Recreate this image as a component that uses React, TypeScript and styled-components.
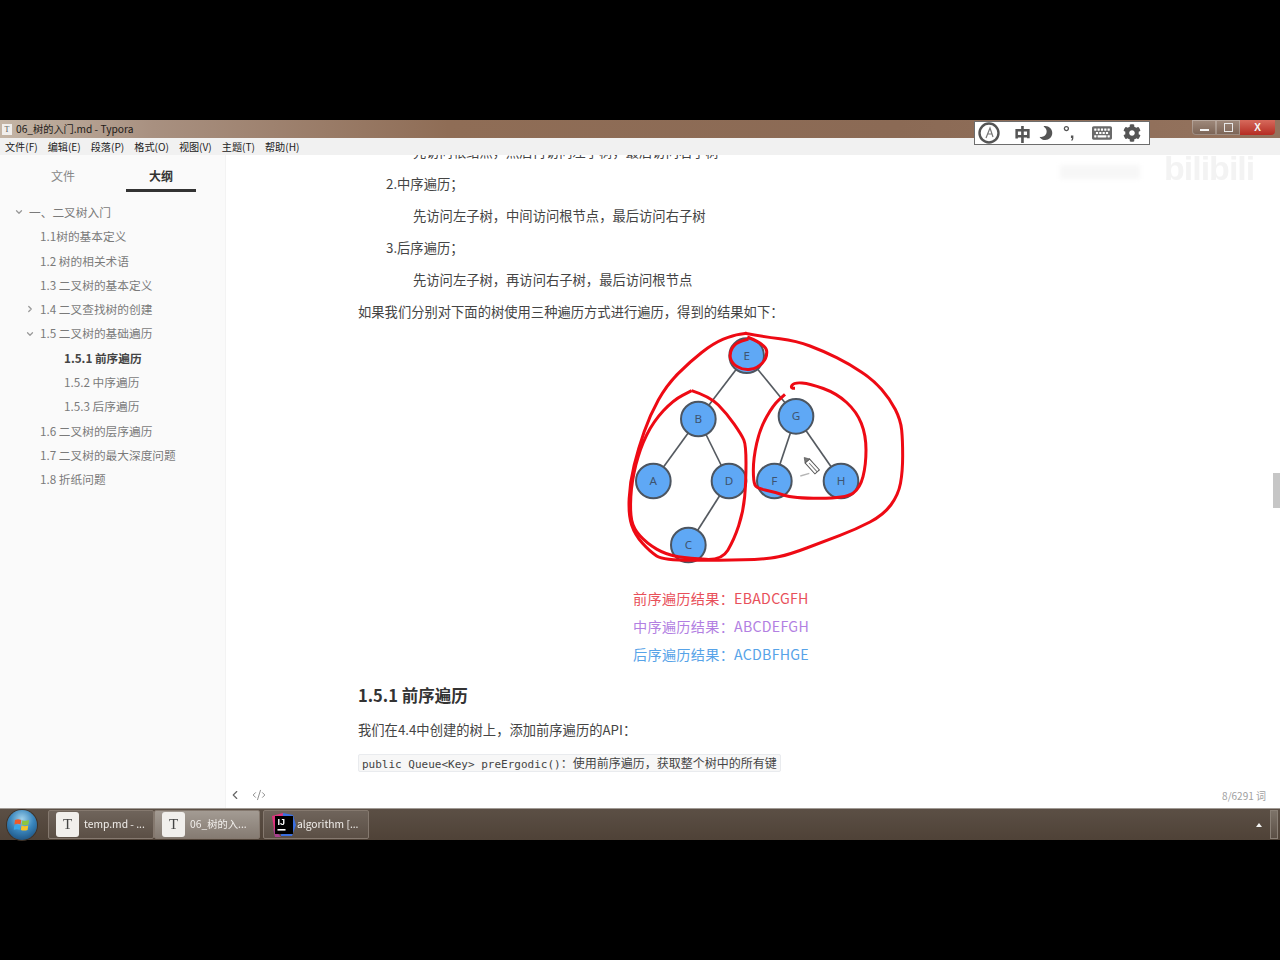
import styled, {createGlobalStyle} from "styled-components";
import {FaCog, FaKeyboard, FaMoon} from "react-icons/fa";
import {ChevronDown, ChevronLeft, ChevronRight, CodeXml} from "lucide-react";

const CJK = `"Noto Sans CJK SC", "Noto Sans", sans-serif`;

type OutlineItem = {
    label: string;
    level: 0 | 1 | 2;
    arrow?: "open" | "closed";
    active?: boolean;
};

const outline: OutlineItem[] = [
    {label: "一、二叉树入门", level: 0, arrow: "open"},
    {label: "1.1树的基本定义", level: 1},
    {label: "1.2 树的相关术语", level: 1},
    {label: "1.3 二叉树的基本定义", level: 1},
    {label: "1.4 二叉查找树的创建", level: 1, arrow: "closed"},
    {label: "1.5 二叉树的基础遍历", level: 1, arrow: "open"},
    {label: "1.5.1 前序遍历", level: 2, active: true},
    {label: "1.5.2 中序遍历", level: 2},
    {label: "1.5.3 后序遍历", level: 2},
    {label: "1.6 二叉树的层序遍历", level: 1},
    {label: "1.7 二叉树的最大深度问题", level: 1},
    {label: "1.8 折纸问题", level: 1},
];

const menus = ["文件(F)", "编辑(E)", "段落(P)", "格式(O)", "视图(V)", "主题(T)", "帮助(H)"];

// Node positions are in the 3x coordinates of the 930x735 drawing
const nodes = [
    {id: "E", x: 410, y: 92},
    {id: "B", x: 265, y: 282},
    {id: "G", x: 558, y: 274},
    {id: "A", x: 130, y: 468},
    {id: "D", x: 357, y: 468},
    {id: "F", x: 493, y: 468},
    {id: "H", x: 693, y: 468},
    {id: "C", x: 235, y: 660},
];

const edges = [
    ["E", "B"],
    ["E", "G"],
    ["B", "A"],
    ["B", "D"],
    ["D", "C"],
    ["G", "F"],
    ["G", "H"],
];

const outerLoop = [
    [405, 25], [460, 35], [560, 48], [640, 78], [720, 118], [790, 165], [840, 222], [872, 285], [878, 345],
    [878, 440], [865, 510], [820, 570], [740, 612], [640, 650], [540, 688], [470, 703], [330, 706], [160, 706],
    [120, 680], [75, 630], [55, 570], [60, 470], [85, 370], [120, 270], [170, 180], [240, 110], [310, 55], [370, 30], [410, 25],
];
const leftLoop = [
    [245, 197], [300, 215], [350, 265], [395, 330], [408, 360], [408, 470], [400, 560], [372, 645], [335, 706],
    [240, 700], [170, 690], [110, 655], [70, 610], [60, 560], [65, 470], [90, 370], [130, 290], [190, 225], [245, 197],
];
const rootLoop = [
    [412, 36], [468, 58], [472, 98], [442, 130], [400, 136], [365, 115], [358, 85], [375, 55], [415, 42],
];
const rightLoop = [
    [555, 190], [540, 190], [552, 172], [600, 176], [680, 205], [740, 260], [768, 330], [768, 420], [750, 490],
    [708, 520], [550, 520], [490, 500], [440, 490], [430, 470], [430, 400], [450, 310], [490, 240], [525, 208],
];

// Round the hand drawn loop through the midpoints of its points
const smooth = (points: number[][]) => {
    let d = `M${points[0][0]} ${points[0][1]}`;
    for (let i = 1; i < points.length - 1; i++) {
        const midX = (points[i][0] + points[i + 1][0]) / 2;
        const midY = (points[i][1] + points[i + 1][1]) / 2;
        d += ` Q${points[i][0]} ${points[i][1]} ${midX} ${midY}`;
    }
    const last = points[points.length - 1];
    return `${d} L${last[0]} ${last[1]}`;
};

const TreeDiagram = () => {
    const find = (id: string) => nodes.find((n) => n.id === id)!;
    return (
        <Figure viewBox="0 0 930 735">
            {edges.map(([from, to]) => (
                <line
                    key={from + to}
                    x1={find(from).x}
                    y1={find(from).y}
                    x2={find(to).x}
                    y2={find(to).y}
                    stroke="#555a60"
                    strokeWidth={5}
                />
            ))}
            {nodes.map((n) => (
                <g key={n.id}>
                    <circle cx={n.x} cy={n.y} r={52} fill="#5fa8f5" stroke="#4c5560" strokeWidth={6} />
                    <NodeLabel x={n.x} y={n.y + 12}>
                        {n.id}
                    </NodeLabel>
                </g>
            ))}
            {[outerLoop, leftLoop, rootLoop, rightLoop].map((loop, i) => (
                <path key={i} d={smooth(loop)} fill="none" stroke="#ee0a14" strokeWidth={9} strokeLinejoin="round" />
            ))}
            <path d="M571 453 L598 445" stroke="#b5b5b5" strokeWidth={4} fill="none" />
            <g transform="rotate(48 606 425)">
                <rect x={584} y={415} width={44} height={18} fill="#fff" stroke="#555" strokeWidth={3} />
                <path d="M584 415 L570 424 L584 433 Z" fill="#777" stroke="#555" strokeWidth={2} />
                <path d="M592 424 H628" stroke="#777" strokeWidth={3} />
            </g>
        </Figure>
    );
};

const App = () => {
    return (
        <>
            <GlobalStyle />
            <Screen>
                <Letterbox />
                <Window>
                    <TitleBar>
                        <AppIcon>T</AppIcon>
                        <TitleText>06_树的入门.md - Typora</TitleText>
                        <WindowControls>
                            <MinButton>
                                <MinGlyph />
                            </MinButton>
                            <MaxButton>
                                <MaxGlyph />
                            </MaxButton>
                            <CloseButton>X</CloseButton>
                        </WindowControls>
                    </TitleBar>
                    <MenuBar>
                        {menus.map((m) => (
                            <MenuItem key={m}>{m}</MenuItem>
                        ))}
                    </MenuBar>
                    <Body>
                        <Sidebar>
                            <Tabs>
                                <Tab>文件</Tab>
                                <Tab $active>大纲</Tab>
                            </Tabs>
                            <Outline>
                                {outline.map((item) => (
                                    <OutlineRow key={item.label} $level={item.level} $active={item.active}>
                                        {item.arrow && (
                                            <Arrow>
                                                {item.arrow === "open" ? (
                                                    <ChevronDown size={10} strokeWidth={3} />
                                                ) : (
                                                    <ChevronRight size={10} strokeWidth={3} />
                                                )}
                                            </Arrow>
                                        )}
                                        {item.label}
                                    </OutlineRow>
                                ))}
                            </Outline>
                        </Sidebar>
                        <Main>
                            <Content>
                                <Article>
                                    <SubLine>{"先访问根结点\uFF0C然后再访问左子树\uFF0C最后访问右子树"}</SubLine>
                                    <OrderLine>{"2.中序遍历\uFF1B"}</OrderLine>
                                    <SubLine>{"先访问左子树\uFF0C中间访问根节点\uFF0C最后访问右子树"}</SubLine>
                                    <OrderLine>{"3.后序遍历\uFF1B"}</OrderLine>
                                    <SubLine>{"先访问左子树\uFF0C再访问右子树\uFF0C最后访问根节点"}</SubLine>
                                    <Paragraph>
                                        {"如果我们分别对下面的树使用三种遍历方式进行遍历\uFF0C得到的结果如下\uFF1A"}
                                    </Paragraph>
                                    <TreeDiagram />
                                    <Results>
                                        <ResultLine $color="#e8505a">{"前序遍历结果\uFF1AEBADCGFH"}</ResultLine>
                                        <ResultLine $color="#b27fe2">{"中序遍历结果\uFF1AABCDEFGH"}</ResultLine>
                                        <ResultLine $color="#57a3e8">{"后序遍历结果\uFF1AACDBFHGE"}</ResultLine>
                                    </Results>
                                    <Heading>1.5.1 前序遍历</Heading>
                                    <ApiLine>{"我们在4.4中创建的树上\uFF0C添加前序遍历的API\uFF1A"}</ApiLine>
                                    <CodeLine>
                                        <code>public Queue&lt;Key&gt; preErgodic()</code>
                                        {"\uFF1A使用前序遍历\uFF0C获取整个树中的所有键"}
                                    </CodeLine>
                                </Article>
                            </Content>
                            <Footer>
                                <FooterIcons>
                                    <ChevronLeft size={14} strokeWidth={2} color="#666" />
                                    <CodeXml size={14} strokeWidth={1.4} color="#777" />
                                </FooterIcons>
                                <WordCount>8/6291 词</WordCount>
                            </Footer>
                            <ScrollThumb />
                        </Main>
                    </Body>
                    <ImeBar>
                        <ImeDial>
                            <svg width="24" height="24" viewBox="0 0 24 24">
                                <circle cx="12" cy="12" r="9.5" fill="#fff" stroke="#555" strokeWidth="2.4" />
                                <path d="M9 17 L13 7 L16 16 M10 13 H15" fill="none" stroke="#777" strokeWidth="1.2" />
                            </svg>
                        </ImeDial>
                        <ImeZh>中</ImeZh>
                        <MoonGlyph>
                            <FaMoon size={14} />
                        </MoonGlyph>
                        <ImePunct>°,</ImePunct>
                        <KeyGlyph>
                            <FaKeyboard size={20} />
                        </KeyGlyph>
                        <GearGlyph>
                            <FaCog size={18} />
                        </GearGlyph>
                    </ImeBar>
                    <Watermark>
                        <WatermarkText />
                        <WatermarkLogo>bilibili</WatermarkLogo>
                    </Watermark>
                </Window>
                <Taskbar>
                    <StartOrb>
                        <svg width="18" height="18" viewBox="0 0 18 18">
                            <path d="M2 4 Q5 2.5 8.3 4 L7.6 8.4 Q4.6 7 1.4 8.4 Z" fill="#ef5a2a" />
                            <path d="M9.3 4.2 Q12.5 5.5 16 4 L15.4 8.5 Q12 9.8 8.7 8.6 Z" fill="#8cc63f" />
                            <path d="M1.3 9.4 Q4.4 8 7.4 9.4 L6.8 13.8 Q4 12.5 0.7 13.8 Z" fill="#3aa6e8" />
                            <path d="M8.5 9.6 Q12 10.8 15.2 9.5 L14.6 14 Q11 15.2 7.8 14 Z" fill="#f7c325" />
                        </svg>
                    </StartOrb>
                    <TaskGroup>
                        <TaskButton>
                            <TaskT>T</TaskT>
                            <TaskLabel>temp.md - ...</TaskLabel>
                        </TaskButton>
                        <TaskButton $current>
                            <TaskT>T</TaskT>
                            <TaskLabel>06_树的入...</TaskLabel>
                        </TaskButton>
                    </TaskGroup>
                    <TaskButton>
                        <IdeaIcon viewBox="0 0 26 26">
                            <path d="M1 4 L12 1 L13 14 L4 24 Z" fill="#e0337e" />
                            <path d="M12 1 L22 3 L25 13 L21 24 L10 24 Z" fill="#3b6fe0" />
                            <path d="M2 16 L10 25 L4 25 Z" fill="#a8408f" />
                            <rect x="4" y="4" width="18" height="18" fill="#000" />
                            <IdeaLetters x="6.5" y="13">
                                IJ
                            </IdeaLetters>
                            <rect x="6.5" y="17" width="8" height="1.6" fill="#fff" />
                        </IdeaIcon>
                        <TaskLabel>algorithm [...</TaskLabel>
                    </TaskButton>
                    <Tray>
                        <TrayArrow />
                        <ShowDesktop />
                    </Tray>
                </Taskbar>
                <Letterbox $grow />
            </Screen>
        </>
    );
};

const GlobalStyle = createGlobalStyle`
    html, body {
        margin: 0;
        padding: 0;
        background: #000;
    }
`;

const Screen = styled.div`
    display: flex;
    flex-direction: column;
    width: 1280px;
    height: 960px;
    overflow: hidden;
    background: #000;
    font-family: ${CJK};
`;

const Letterbox = styled.div<{$grow?: boolean}>`
    flex: ${(props) => (props.$grow ? "1" : "0 0 120px")};
    background: #000;
`;

const Window = styled.div`
    position: relative;
    display: flex;
    flex-direction: column;
    height: 688px;
    filter: blur(0.35px);
`;

const TitleBar = styled.div`
    display: flex;
    align-items: center;
    height: 18px;
    padding-left: 2px;
    background: linear-gradient(90deg, #c4b5a6 0, #a89080 12%, #8f6d56 35%, #8b6a55 70%, #94735e 100%);
`;

const AppIcon = styled.div`
    display: flex;
    align-items: center;
    justify-content: center;
    width: 10px;
    height: 11px;
    background: #f1efed;
    color: #555;
    font-size: 8px;
    font-family: "Liberation Serif", serif;
`;

const TitleText = styled.span`
    margin: -2px 0 0 4px;
    font-size: 10.2px;
    color: #1d1a18;
`;

const WindowControls = styled.div`
    display: flex;
    height: 15px;
    margin-left: auto;
    margin-right: 5px;
    margin-top: -3px;
`;

const MinButton = styled.div`
    display: flex;
    align-items: center;
    justify-content: center;
    width: 24px;
    border-radius: 0 0 0 4px;
    background: linear-gradient(#a08a7c, #7a6355);
    box-shadow: inset 0 0 0 1px rgba(255, 255, 255, 0.25);
`;

const MinGlyph = styled.div`
    width: 9px;
    height: 2px;
    margin-top: 4px;
    background: #f4f4f4;
`;

const MaxButton = styled(MinButton)`
    width: 24px;
    border-radius: 0;
`;

const MaxGlyph = styled.div`
    width: 7px;
    height: 7px;
    border: 1.5px solid #e8e8e8;
`;

const CloseButton = styled.div`
    display: flex;
    align-items: center;
    justify-content: center;
    width: 35px;
    border-radius: 0 0 4px 0;
    background: linear-gradient(#d66a5c, #b52c22);
    color: #f4f4f4;
    font-size: 10px;
    font-weight: 700;
    font-family: "Liberation Sans", sans-serif;
`;

const MenuBar = styled.div`
    display: flex;
    align-items: center;
    gap: 10px;
    height: 17px;
    padding-left: 5px;
    background: #f1f1f1;
`;

const MenuItem = styled.span`
    font-size: 10.15px;
    color: #222;
    white-space: nowrap;
`;

const Body = styled.div`
    display: flex;
    flex: 1;
    min-height: 0;
`;

const Sidebar = styled.aside`
    flex: 0 0 226px;
    background: #fafafa;
    border-right: 1px solid #f3f3f3;
    box-sizing: border-box;
`;

const Tabs = styled.div`
    display: grid;
    grid-template-columns: 70px 70px;
    column-gap: 28px;
    padding-left: 28px;
    height: 37px;
`;

const Tab = styled.div<{$active?: boolean}>`
    display: flex;
    align-items: center;
    justify-content: center;
    height: 37px;
    box-sizing: border-box;
    padding-top: 6px;
    font-size: 12px;
    font-weight: ${(props) => (props.$active ? 700 : 400)};
    color: ${(props) => (props.$active ? "#333" : "#888")};
    border-bottom: 3px solid ${(props) => (props.$active ? "#333" : "transparent")};
`;

const Outline = styled.div`
    display: flex;
    flex-direction: column;
    padding-top: 8px;
`;

const OutlineRow = styled.div<{$level: number; $active?: boolean}>`
    position: relative;
    height: 24.3px;
    line-height: 24.3px;
    padding-left: ${(props) => [29, 40, 64][props.$level]}px;
    font-size: 11.7px;
    font-weight: ${(props) => (props.$active ? 700 : 400)};
    color: ${(props) => (props.$active ? "#444" : "#7a7a7a")};
    white-space: nowrap;
`;

const Arrow = styled.span`
    position: absolute;
    display: flex;
    align-items: center;
    top: 0;
    height: 24.3px;
    margin-left: -15px;
    color: #999;
`;

const Main = styled.main`
    position: relative;
    display: flex;
    flex-direction: column;
    flex: 1;
    min-width: 0;
    background: #fff;
`;

const Content = styled.div`
    flex: 1;
    min-height: 0;
    overflow: hidden;
    padding-left: 132px;
`;

// The document is scrolled, so its first line is cut by the menu bar
const Article = styled.article`
    margin-top: -19px;
    color: #333;
    font-size: 13.3px;
`;

const Paragraph = styled.p`
    margin: 0;
    height: 32px;
    line-height: 32px;
    color: #444;
    white-space: nowrap;
`;

const OrderLine = styled(Paragraph)`
    padding-left: 28px;
`;

const SubLine = styled(Paragraph)`
    padding-left: 55px;
`;

const Figure = styled.svg`
    display: block;
    width: 310px;
    height: 245px;
    margin: -3px 0 0 252px;
`;

const NodeLabel = styled.text`
    font-family: "Noto Sans", sans-serif;
    font-size: 35px;
    fill: #3e5470;
    text-anchor: middle;
`;

const Results = styled.div`
    display: flex;
    flex-direction: column;
    margin: 14px 0 0 275px;
`;

const ResultLine = styled.div<{$color: string}>`
    height: 28px;
    line-height: 28px;
    font-size: 14.2px;
    letter-spacing: 0.25px;
    color: ${(props) => props.$color};
    white-space: nowrap;
`;

const Heading = styled.h3`
    margin: 15px 0 0;
    height: 24px;
    line-height: 24px;
    font-size: 16.5px;
    font-weight: 700;
    color: #333;
`;

const ApiLine = styled(Paragraph)`
    margin-top: 7px;
`;

const CodeLine = styled.div`
    display: inline-block;
    box-sizing: border-box;
    height: 18px;
    line-height: 16px;
    margin-top: 8px;
    padding: 0 3px;
    background: #f7f7f7;
    border: 1px solid #e9ebee;
    border-radius: 2px;
    font-size: 12px;
    color: #444;
    white-space: nowrap;

    code {
        font-family: "DejaVu Sans Mono", monospace;
        font-size: 11px;
    }
`;

const Footer = styled.footer`
    display: flex;
    align-items: center;
    justify-content: space-between;
    flex: 0 0 26px;
    padding: 0 14px 0 2px;
`;

const FooterIcons = styled.div`
    display: flex;
    align-items: center;
    gap: 10px;
`;

const WordCount = styled.span`
    font-size: 10px;
    color: #a0a0a0;
`;

const ScrollThumb = styled.div`
    position: absolute;
    top: 318px;
    right: 0;
    width: 7px;
    height: 35px;
    background: #c6c6c6;
`;

const ImeBar = styled.div`
    position: absolute;
    top: 1px;
    left: 974px;
    display: flex;
    align-items: center;
    box-sizing: border-box;
    width: 176px;
    height: 24px;
    background: #fff;
    border: 1px solid #6d6d6d;
    color: #555;
`;

const ImeDial = styled.div`
    display: flex;
    margin-left: 2px;
`;

const ImeZh = styled.span`
    margin-left: 13px;
    font-size: 17px;
    font-weight: 900;
    line-height: 1;
`;

const MoonGlyph = styled.span`
    display: flex;
    margin-left: 8px;
    transform: scaleX(-1);
`;

const ImePunct = styled.span`
    margin-left: 10px;
    width: 22px;
    font-size: 17px;
    font-weight: 700;
    font-family: "Liberation Sans", sans-serif;
`;

const KeyGlyph = styled.span`
    display: flex;
    margin-left: 7px;
    color: #6a6a6a;
`;

const GearGlyph = styled.span`
    display: flex;
    margin-left: 11px;
`;

const Watermark = styled.div`
    position: absolute;
    top: 26px;
    left: 1060px;
    display: flex;
    align-items: center;
    gap: 24px;
`;

const WatermarkText = styled.div`
    width: 80px;
    height: 14px;
    margin-top: 8px;
    background: #f7f7f7;
    filter: blur(2px);
`;

const WatermarkLogo = styled.span`
    font-family: "Liberation Sans", sans-serif;
    font-size: 34px;
    font-weight: 700;
    line-height: 44px;
    letter-spacing: -1px;
    color: #f3f3f3;
`;

const Taskbar = styled.div`
    display: flex;
    align-items: center;
    height: 32px;
    background: linear-gradient(#5b4f45, #4f4237);
    border-top: 1px solid #a09a94;
    box-sizing: border-box;
    filter: blur(0.3px);
`;

const StartOrb = styled.div`
    display: flex;
    align-items: center;
    justify-content: center;
    flex: 0 0 30px;
    height: 30px;
    margin: 0 11px 0 7px;
    border-radius: 50%;
    background: radial-gradient(circle at 50% 30%, #9fd0ea 0, #3a86bd 45%, #123f6b 100%);
    box-shadow: 0 0 0 1px #3d3229;
`;

const TaskGroup = styled.div`
    display: flex;
    margin-right: 3px;
`;

const TaskButton = styled.div<{$current?: boolean}>`
    display: flex;
    align-items: center;
    box-sizing: border-box;
    width: 106px;
    height: 29px;
    padding-left: 7px;
    gap: 5px;
    background: ${(props) =>
        props.$current
            ? "linear-gradient(#a39b93, #857b72)"
            : "linear-gradient(#6f645b, #5b4f45)"};
    border: 1px solid #85796f;
    border-radius: 2px;
    color: #f2efec;
    white-space: nowrap;
`;

const TaskLabel = styled.span`
    margin-bottom: 3px;
    font-size: 10.3px;
`;

const TaskT = styled.div`
    display: flex;
    align-items: center;
    justify-content: center;
    flex: 0 0 23px;
    height: 25px;
    background: #f1efec;
    border-radius: 3px;
    color: #444;
    font-size: 15px;
    font-family: "Liberation Serif", serif;
`;

const IdeaIcon = styled.svg`
    flex: 0 0 26px;
    height: 26px;
    margin-right: -5px;
`;

const IdeaLetters = styled.text`
    fill: #fff;
    font-family: "Liberation Sans", sans-serif;
    font-size: 9px;
    font-weight: 700;
`;

const Tray = styled.div`
    display: flex;
    align-items: center;
    margin-left: auto;
    height: 100%;
`;

const TrayArrow = styled.div`
    width: 0;
    height: 0;
    margin-right: 8px;
    border-left: 3px solid transparent;
    border-right: 3px solid transparent;
    border-bottom: 4px solid #f3f3f3;
`;

const ShowDesktop = styled.div`
    width: 8px;
    height: 29px;
    margin-right: 2px;
    background: linear-gradient(#7d7369, #5b4f45);
    border: 1px solid #8a8076;
    box-sizing: border-box;
`;

export default App;
